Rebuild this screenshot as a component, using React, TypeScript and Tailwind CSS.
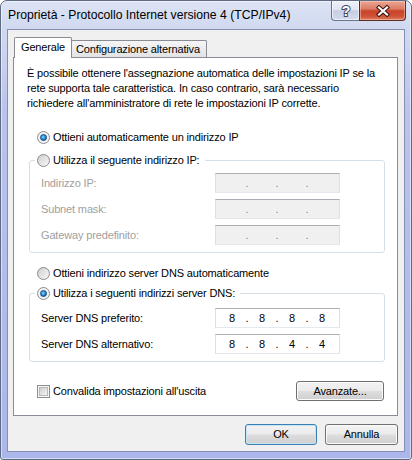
import React from "react";

const FONT = "font-['Liberation_Sans',Arial,sans-serif]";

function Radio({ id, checked }: { id: string; checked?: boolean }) {
  return (
    <svg width="13" height="13" viewBox="0 0 13 13" className="shrink-0">
      <defs>
        <linearGradient id={`${id}-bg`} x1="0" y1="0" x2="1" y2="1">
          <stop offset="0" stopColor="#cdcdcd" />
          <stop offset="1" stopColor="#fafafa" />
        </linearGradient>
        <radialGradient id={`${id}-dot`} cx="0.45" cy="0.45" r="0.6">
          <stop offset="0" stopColor="#9be6fc" />
          <stop offset="0.45" stopColor="#2a95d8" />
          <stop offset="1" stopColor="#0e3f80" />
        </radialGradient>
      </defs>
      <circle cx="6.5" cy="6.5" r="6" fill={checked ? "#f4f4f4" : `url(#${id}-bg)`} stroke="#8a8a8a" />
      {checked && (
        <circle cx="6.5" cy="6.5" r="3.1" fill={`url(#${id}-dot)`} stroke="#1c4a85" strokeWidth="0.7" />
      )}
    </svg>
  );
}

function Checkbox() {
  return (
    <svg width="13" height="13" viewBox="0 0 13 13" className="shrink-0">
      <defs>
        <linearGradient id="cb-bg" x1="0" y1="0" x2="1" y2="1">
          <stop offset="0" stopColor="#cbcbcb" />
          <stop offset="1" stopColor="#f7f7f7" />
        </linearGradient>
      </defs>
      <rect x="0.5" y="0.5" width="12" height="12" fill="#f5f5f5" stroke="#8e8e8e" />
      <rect x="2.5" y="2.5" width="8" height="8" fill="url(#cb-bg)" stroke="#b9b9b9" />
    </svg>
  );
}

function IpField({ parts, disabled }: { parts: string[]; disabled?: boolean }) {
  return (
    <div
      className={`flex h-[20px] w-[125px] shrink-0 items-center border border-[#dbdfe6] border-t-[#abadb3] border-b-[#e3e9ef] pl-[3px] leading-[14px] ${
        disabled ? "bg-[#f0f0f0] text-[#7f839c]" : "bg-white text-black"
      }`}
    >
      {parts.map((p, i) => (
        <React.Fragment key={i}>
          {i > 0 && <span className="w-[4px] text-center">.</span>}
          <span className="w-[26px] text-center">{p}</span>
        </React.Fragment>
      ))}
    </div>
  );
}

function Button({ label, width, primary }: { label: string; width: string; primary?: boolean }) {
  return (
    <div
      className={`flex items-center justify-center rounded-[3px] border bg-[linear-gradient(to_bottom,#f3f3f3_0%,#ebebeb_48%,#dddddd_52%,#cfcfcf_100%)] ${width} ${
        primary
          ? "border-[#3c7fb1] shadow-[inset_0_0_0_1px_#c3e6f7]"
          : "border-[#707070] shadow-[inset_0_0_0_1px_#fbfbfb]"
      }`}
    >
      {label}
    </div>
  );
}

function FieldRow({ label, parts, disabled }: { label: string; parts: string[]; disabled?: boolean }) {
  return (
    <div className="flex h-[20px] items-center pl-[11px]">
      <span className={`w-[174px] shrink-0 ${disabled ? "text-[#a0a0a0]" : "text-black"}`}>{label}</span>
      <IpField parts={parts} disabled={disabled} />
    </div>
  );
}

export default function App() {
  const blank = ["", "", "", ""];
  return (
    <div className={`h-[460px] w-[412px] bg-white ${FONT} text-[11px] tracking-[-0.15px] text-black`}>
      <div className="flex h-full w-full flex-col rounded-t-[7px] rounded-b-[3px] border border-[#5f6a84] bg-[linear-gradient(to_bottom,#dce3f4_0px,#d1d9f1_28px,#b9c3ec_110px,#abb6ea_100%)] shadow-[inset_0_0_0_1px_rgba(255,255,255,0.5)]">
        {/* title bar */}
        <div className="flex h-[28px] shrink-0">
          <div className="pl-[7px] pt-[7px] text-[12.2px] leading-[15px] tracking-normal">
            Proprietà - Protocollo Internet versione 4 (TCP/IPv4)
          </div>
          <div className="ml-auto mr-[5px] flex self-start">
            <div className="flex h-[20px] w-[28px] items-center justify-center rounded-bl-[4px] border border-t-0 border-r-0 border-[#6a7590] bg-[linear-gradient(to_bottom,#eef1f8_0%,#e1e6f2_45%,#c7cee2_52%,#d6dcec_100%)] shadow-[inset_0_0_0_1px_rgba(255,255,255,0.55)]">
              <svg width="12" height="14" viewBox="0 0 12 14">
                <text
                  x="6"
                  y="12"
                  textAnchor="middle"
                  fontFamily="Liberation Sans, Arial, sans-serif"
                  fontWeight="bold"
                  fontSize="14"
                  fill="#ffffff"
                  stroke="#3d4866"
                  strokeWidth="2"
                  paintOrder="stroke"
                >
                  ?
                </text>
              </svg>
            </div>
            <div className="flex h-[20px] w-[47px] items-center justify-center rounded-br-[4px] border border-t-0 border-[#5e2b24] bg-[linear-gradient(to_bottom,#eaa896_0%,#dc7a62_42%,#c8432a_52%,#cf5235_80%,#dc7d5f_100%)] shadow-[inset_0_0_0_1px_rgba(255,220,210,0.45)]">
              <svg width="14" height="12" viewBox="0 0 14 12">
                <path d="M3 2.5 L11 9.5 M11 2.5 L3 9.5" stroke="#3b1410" strokeWidth="4.2" strokeLinecap="square" />
                <path d="M3 2.5 L11 9.5 M11 2.5 L3 9.5" stroke="#ffffff" strokeWidth="2.2" strokeLinecap="square" />
              </svg>
            </div>
          </div>
        </div>

        {/* client area */}
        <div className="mx-[6px] mb-[7px] flex-1 border border-[#8390b4] bg-[#f0f0f0] pl-[5px] pt-[7px]">
          {/* tabs */}
          <div className="relative z-10 ml-[1px] flex h-[20px] items-end">
            <div className="mb-[-1px] h-[21px] w-[58px] rounded-t-[2px] border border-b-0 border-[#898c95] bg-white pl-[6px] pt-[2px] leading-[15px]">
              Generale
            </div>
            <div className="ml-[-1px] h-[17px] w-[136px] rounded-t-[2px] border border-b-0 border-[#898c95] bg-[linear-gradient(to_bottom,#f5f5f5,#e3e3e3)] pl-[4px] pt-[1px] leading-[15px]">
              Configurazione alternativa
            </div>
          </div>

          {/* tab panel */}
          <div className="flex h-[359px] w-[385px] flex-col border border-[#898c95] bg-white">
            <p className="ml-[13px] mt-[8px] leading-[15px]">
              È possibile ottenere l'assegnazione automatica delle impostazioni IP se la
              <br />
              rete supporta tale caratteristica. In caso contrario, sarà necessario
              <br />
              richiedere all'amministratore di rete le impostazioni IP corrette.
            </p>

            <div className="ml-[23px] mt-[19px] flex h-[14px] items-center gap-[3px] leading-[14px]">
              <Radio id="r1" checked />
              <span>Ottieni automaticamente un indirizzo IP</span>
            </div>

            <fieldset className="ml-[15px] mt-[9px] w-[356px] rounded-[3px] border border-[#d5dfe5] pb-[7px]">
              <legend className="ml-[5px] pl-[2px] pr-[5px]">
                <span className="flex h-[14px] items-center gap-[3px] leading-[14px]">
                  <Radio id="r2" />
                  <span>Utilizza il seguente indirizzo IP:</span>
                </span>
              </legend>
              <div className="mt-[6px] flex flex-col gap-[6px]">
                <FieldRow label="Indirizzo IP:" parts={blank} disabled />
                <FieldRow label="Subnet mask:" parts={blank} disabled />
                <FieldRow label="Gateway predefinito:" parts={blank} disabled />
              </div>
            </fieldset>

            <div className="ml-[23px] mt-[13px] flex h-[14px] items-center gap-[3px] leading-[14px]">
              <Radio id="r3" />
              <span>Ottieni indirizzo server DNS automaticamente</span>
            </div>

            <fieldset className="ml-[15px] mt-[6px] w-[356px] rounded-[3px] border border-[#d5dfe5] pb-[7px]">
              <legend className="ml-[5px] pl-[2px] pr-[5px]">
                <span className="flex h-[14px] items-center gap-[3px] leading-[14px]">
                  <Radio id="r4" checked />
                  <span>Utilizza i seguenti indirizzi server DNS:</span>
                </span>
              </legend>
              <div className="mt-[8px] flex flex-col gap-[6px]">
                <FieldRow label="Server DNS preferito:" parts={["8", "8", "8", "8"]} />
                <FieldRow label="Server DNS alternativo:" parts={["8", "8", "4", "4"]} />
              </div>
            </fieldset>

            <div className="ml-[23px] mr-[13px] mt-[19px] flex h-[20px] items-center">
              <Checkbox />
              <span className="ml-[3px]">Convalida impostazioni all'uscita</span>
              <div className="ml-auto flex h-[20px]">
                <Button label="Avanzate..." width="w-[88px]" />
              </div>
            </div>
          </div>

          {/* dialog buttons */}
          <div className="mt-[8px] flex h-[21px] w-[385px] justify-end gap-[8px]">
            <Button label="OK" width="w-[72px]" primary />
            <Button label="Annulla" width="w-[73px]" />
          </div>
        </div>
      </div>
    </div>
  );
}
